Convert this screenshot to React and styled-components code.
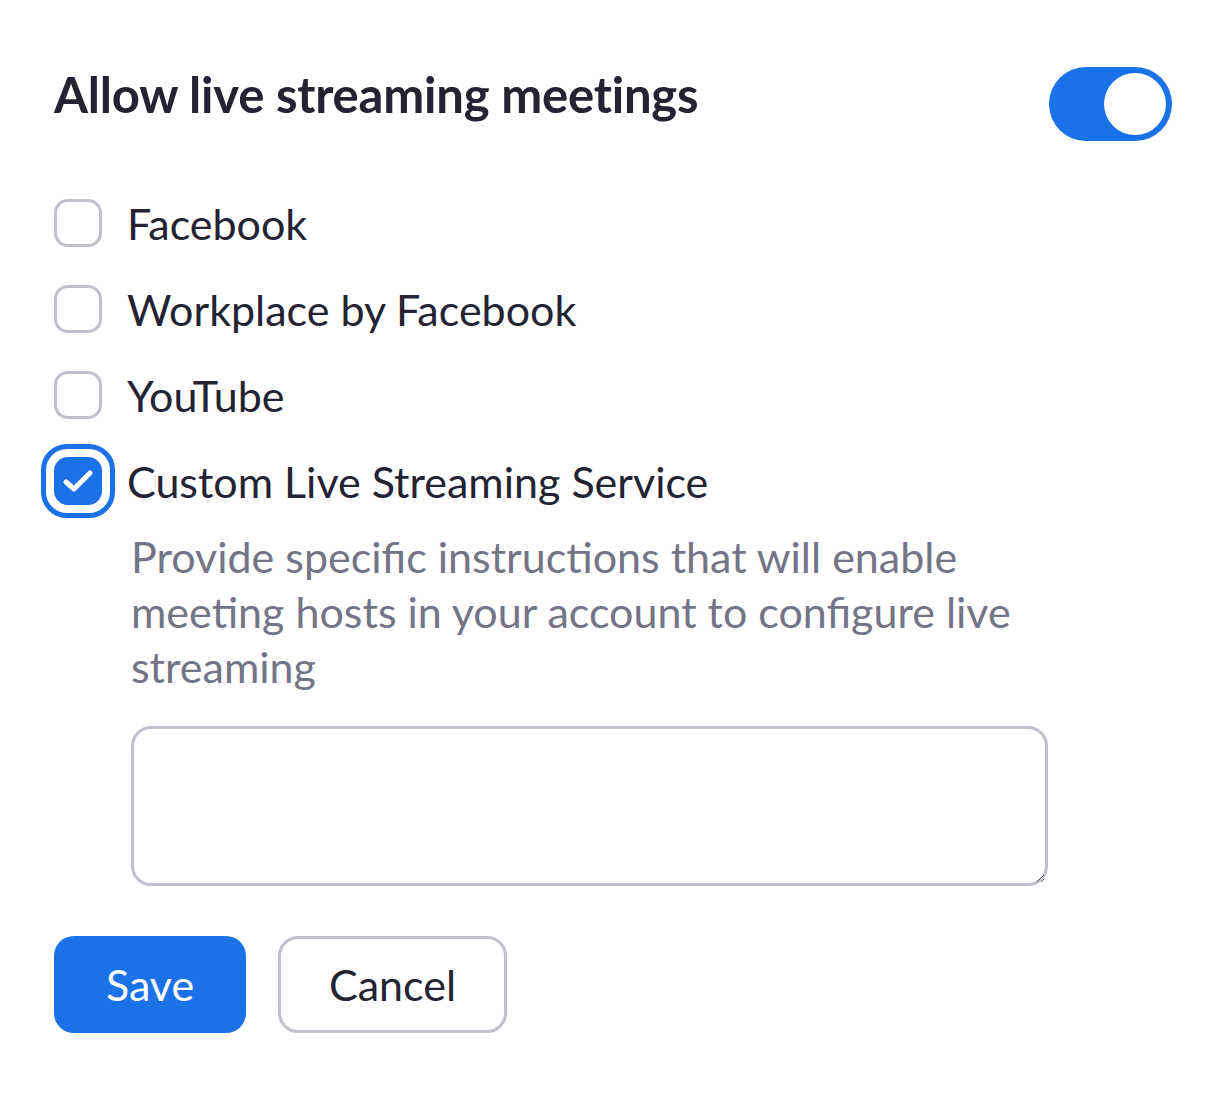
import React, { useState } from "react";
import styled, { createGlobalStyle } from "styled-components";

const Global = createGlobalStyle`
  html, body { margin: 0; padding: 0; background: #fff; }
  body { font-family: Lato, "Noto Sans", sans-serif; color: #232333; }
  * { box-sizing: border-box; }
`;

const Page = styled.div`
  width: 1224px;
  height: 1094px;
  padding: 66px 52px 0 54px;
`;

const Header = styled.div`
  display: flex;
  align-items: center;
  justify-content: space-between;
  height: 76px;
`;

const Title = styled.h1`
  margin: 0;
  font-size: 49px;
  font-weight: 700;
  color: #232333;
  letter-spacing: -0.2px;
  margin-top: -20px;
`;

const Toggle = styled.button`
  position: relative;
  width: 123px;
  height: 74px;
  border-radius: 37px;
  border: none;
  padding: 0;
  background: ${(p) => (p.$on ? "#1b72e8" : "#babac4")};
  cursor: pointer;
`;

const Knob = styled.span`
  position: absolute;
  top: 6px;
  left: ${(p) => (p.$on ? "55px" : "6px")};
  width: 62px;
  height: 62px;
  border-radius: 50%;
  background: #fff;
`;

const List = styled.div`
  display: flex;
  flex-direction: column;
  margin-top: 57px;
  gap: 38px;
`;

const Row = styled.label`
  display: flex;
  align-items: center;
  gap: 25px;
  height: 48px;
  font-size: 43px;
  color: #232333;
  cursor: pointer;
`;

const Box = styled.span`
  position: relative;
  flex: none;
  width: 48px;
  height: 48px;
  border-radius: 14px;
  border: ${(p) => (p.$checked ? "none" : "3px solid #c1c1cb")};
  background: ${(p) => (p.$checked ? "#1b72e8" : "#fff")};
  display: flex;
  align-items: center;
  justify-content: center;
  ${(p) =>
    p.$checked &&
    `
    &::after {
      content: "";
      position: absolute;
      inset: -13px;
      border-radius: 26px;
      border: 5px solid #1b72e8;
      pointer-events: none;
    }
  `}
`;

const Details = styled.div`
  padding-left: 77px;
  margin-top: 24px;
`;

const Description = styled.p`
  margin: 0;
  font-size: 43px;
  line-height: 55px;
  color: #747487;
  max-width: 900px;
`;

const TextArea = styled.textarea`
  display: block;
  margin-top: 32px;
  width: 917px;
  height: 160px;
  border: 3px solid #c1c1cb;
  border-radius: 20px;
  font-family: Lato, sans-serif;
  font-size: 32px;
  padding: 12px 18px;
  outline: none;
  resize: both;
`;

const Actions = styled.div`
  display: flex;
  gap: 32px;
  margin-top: 50px;
`;

const Button = styled.button`
  height: 97px;
  padding: 0;
  width: ${(p) => p.$w}px;
  border-radius: 20px;
  font-family: Lato, sans-serif;
  font-size: 43px;
  cursor: pointer;
  border: ${(p) => (p.$primary ? "none" : "3px solid #c1c1cb")};
  background: ${(p) => (p.$primary ? "#1b72e8" : "#fff")};
  color: ${(p) => (p.$primary ? "#fff" : "#232333")};
`;

const Check = () => (
  <svg width="32" height="24" viewBox="0 0 32 24">
    <path
      d="M4 13 L12 20 L28 4"
      fill="none"
      stroke="#fff"
      strokeWidth="5"
      strokeLinecap="round"
      strokeLinejoin="round"
    />
  </svg>
);

const items = [
  { label: "Facebook", checked: false },
  { label: "Workplace by Facebook", checked: false },
  { label: "YouTube", checked: false },
  { label: "Custom Live Streaming Service", checked: true },
];

export default function App() {
  const [on, setOn] = useState(true);
  return (
    <>
      <Global />
      <Page>
        <Header>
          <Title>Allow live streaming meetings</Title>
          <Toggle $on={on} onClick={() => setOn(!on)} aria-label="toggle">
            <Knob $on={on} />
          </Toggle>
        </Header>
        <List>
          {items.map((it) => (
            <Row key={it.label}>
              <Box $checked={it.checked}>{it.checked && <Check />}</Box>
              {it.label}
            </Row>
          ))}
        </List>
        <Details>
          <Description>
            Provide specific instructions that will enable meeting hosts in your
            account to configure live streaming
          </Description>
          <TextArea />
        </Details>
        <Actions>
          <Button $primary $w={192}>Save</Button>
          <Button $w={229}>Cancel</Button>
        </Actions>
      </Page>
    </>
  );
}
